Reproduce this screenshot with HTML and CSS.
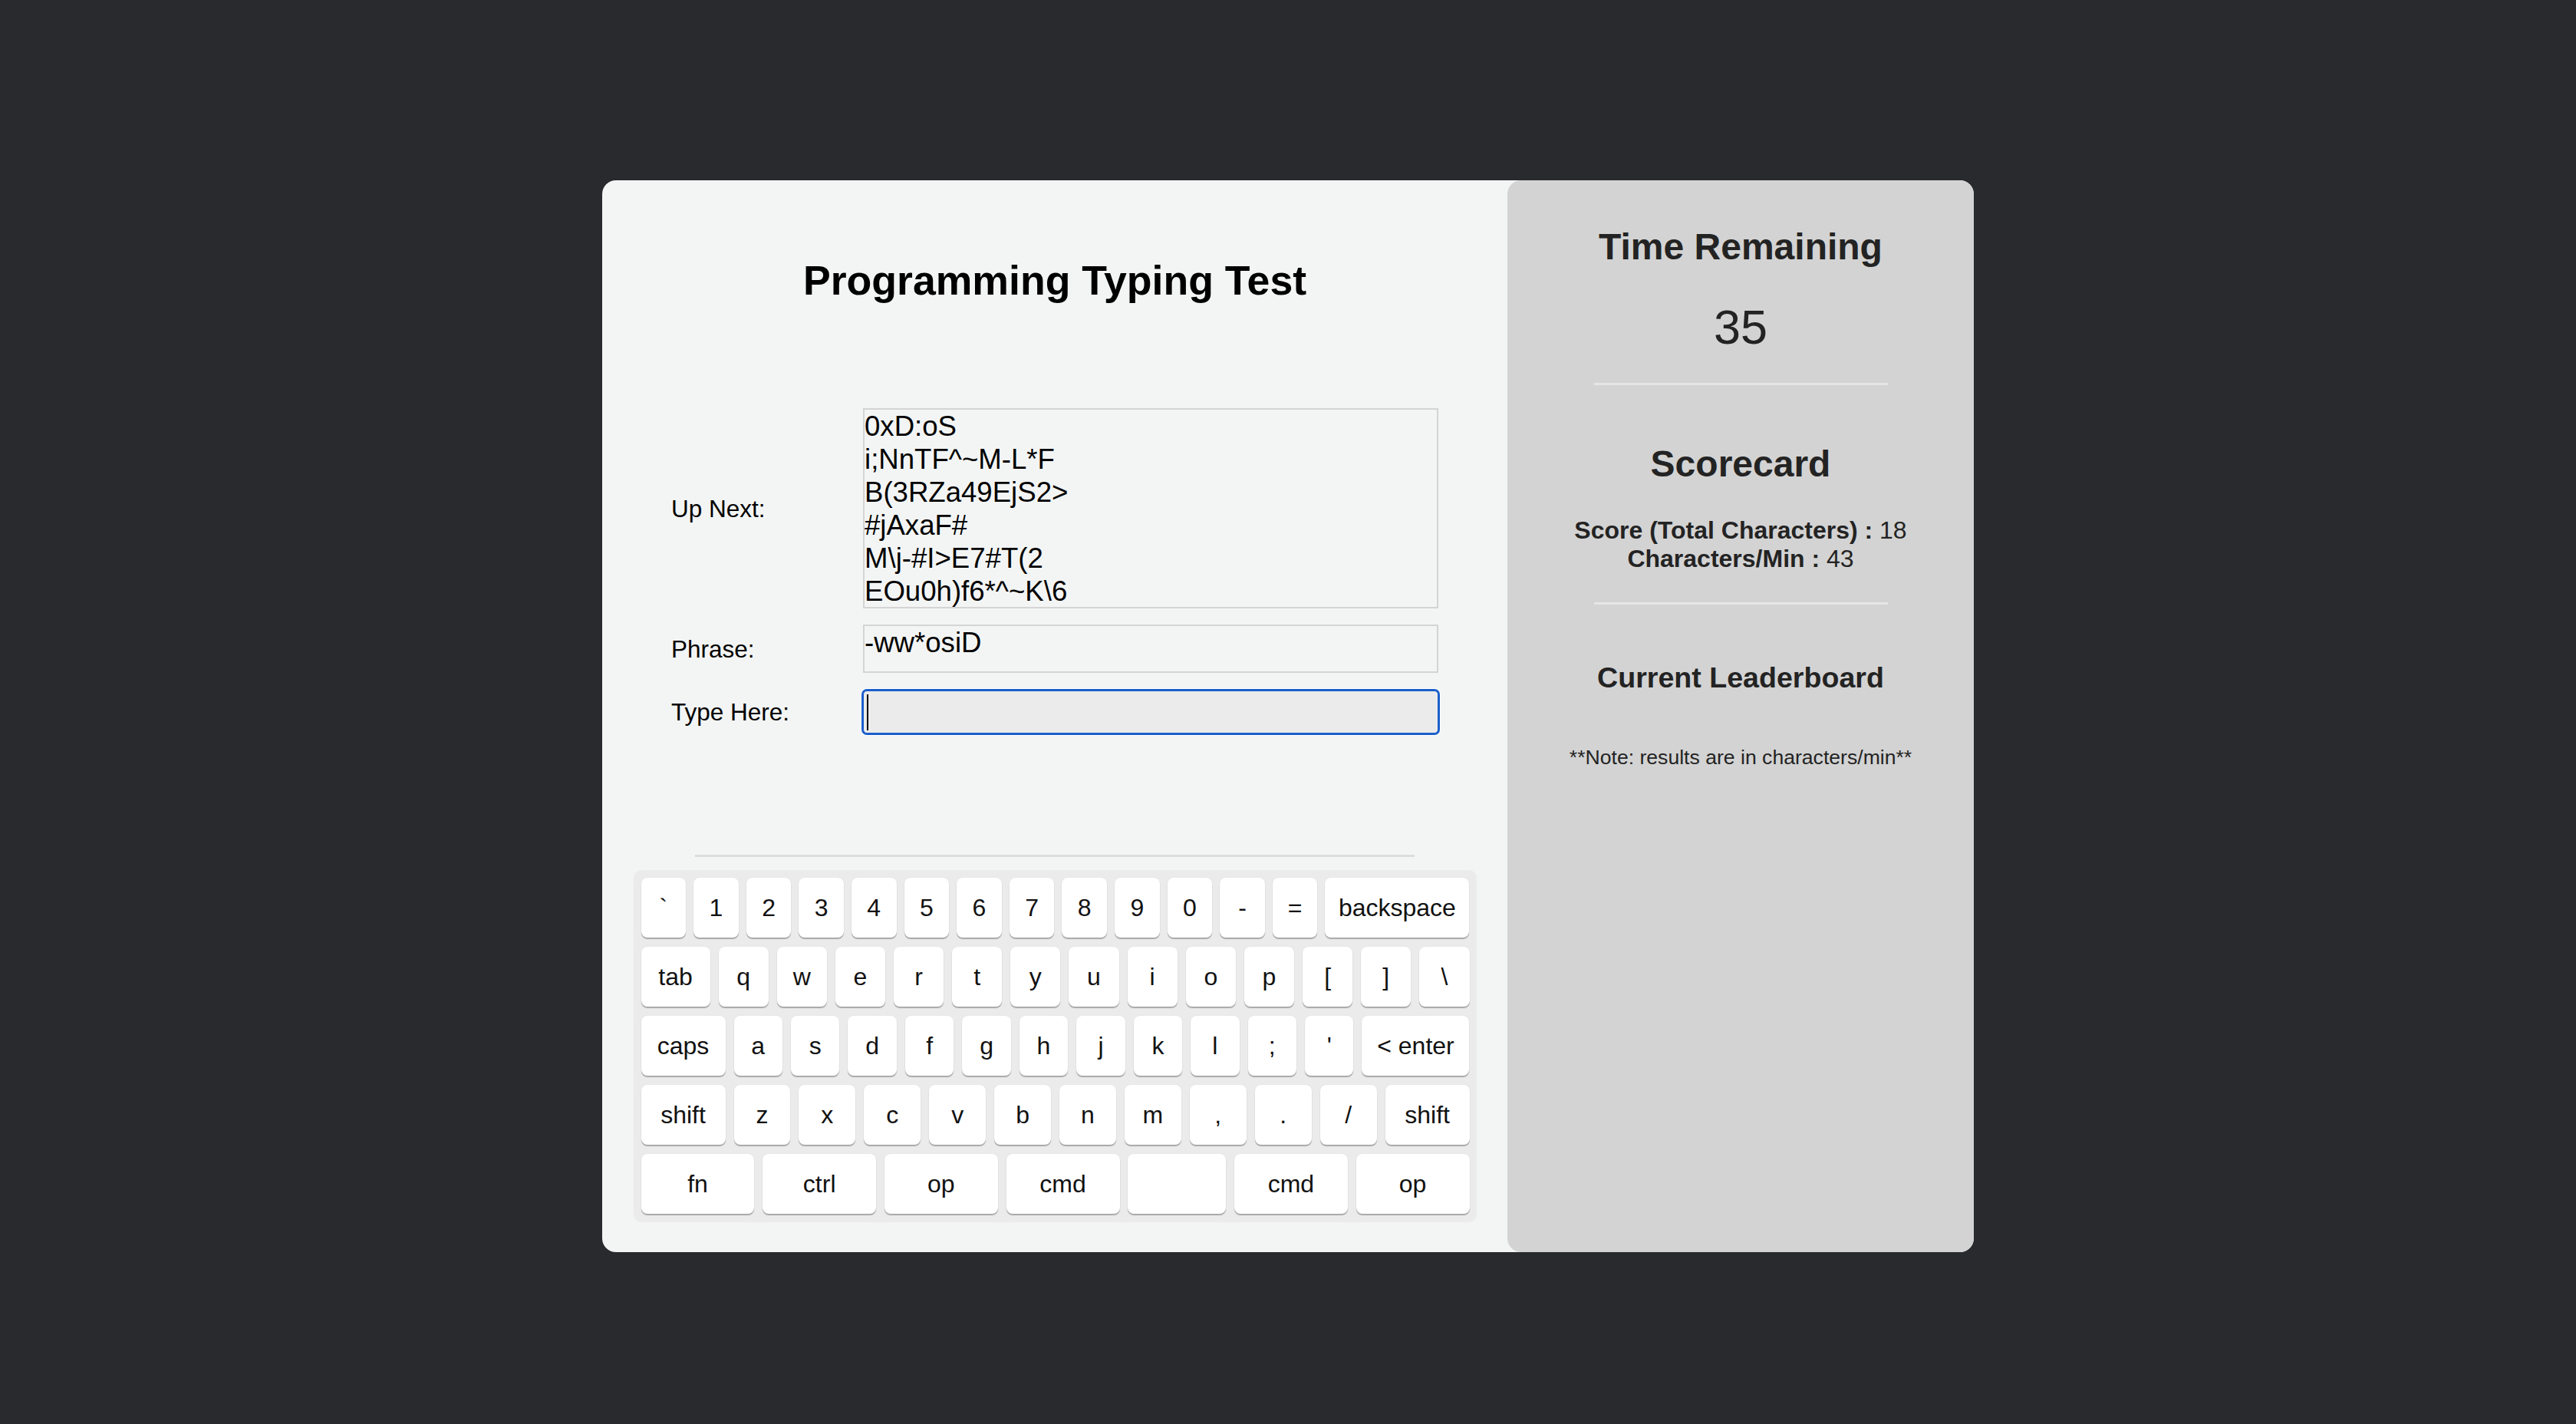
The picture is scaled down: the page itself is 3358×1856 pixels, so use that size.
FILE: index.html
```html
<!DOCTYPE html>
<html lang="en">
<head>
<meta charset="utf-8">
<title>Programming Typing Test</title>
<link rel="stylesheet" href="styles.css">
</head>
<body>
<main class="card">
  <section class="test">
    <h1 class="title">Programming Typing Test</h1>
    <div class="form">
      <div class="label">Up Next:</div>
      <div class="box upnext">0xD:oS<br>i;NnTF^~M-L*F<br>B(3RZa49EjS2&gt;<br>#jAxaF#<br>M\j-#I&gt;E7#T(2<br>EOu0h)f6*^~K\6</div>
      <div class="label">Phrase:</div>
      <div class="box phrase">-ww*osiD</div>
      <div class="label">Type Here:</div>
      <div class="input"><span class="caret"></span></div>
    </div>
    <hr class="rule">
    <div class="keyboard">
      <div class="row r1">
        <div class="key">`</div><div class="key">1</div><div class="key">2</div><div class="key">3</div><div class="key">4</div><div class="key">5</div><div class="key">6</div><div class="key">7</div><div class="key">8</div><div class="key">9</div><div class="key">0</div><div class="key">-</div><div class="key">=</div><div class="key bksp">backspace</div>
      </div>
      <div class="row">
        <div class="key tab">tab</div><div class="key">q</div><div class="key">w</div><div class="key">e</div><div class="key">r</div><div class="key">t</div><div class="key">y</div><div class="key">u</div><div class="key">i</div><div class="key">o</div><div class="key">p</div><div class="key">[</div><div class="key">]</div><div class="key">\</div>
      </div>
      <div class="row">
        <div class="key caps">caps</div><div class="key">a</div><div class="key">s</div><div class="key">d</div><div class="key">f</div><div class="key">g</div><div class="key">h</div><div class="key">j</div><div class="key">k</div><div class="key">l</div><div class="key">;</div><div class="key">'</div><div class="key enter">&lt; enter</div>
      </div>
      <div class="row">
        <div class="key shift">shift</div><div class="key">z</div><div class="key">x</div><div class="key">c</div><div class="key">v</div><div class="key">b</div><div class="key">n</div><div class="key">m</div><div class="key">,</div><div class="key">.</div><div class="key">/</div><div class="key shift">shift</div>
      </div>
      <div class="row r5">
        <div class="key">fn</div><div class="key">ctrl</div><div class="key">op</div><div class="key">cmd</div><div class="key space"></div><div class="key">cmd</div><div class="key">op</div>
      </div>
    </div>
  </section>
  <aside class="panel">
    <h2 class="time-title">Time Remaining</h2>
    <div class="time">35</div>
    <hr class="prule first">
    <h2 class="score-title">Scorecard</h2>
    <p class="stat first-stat"><b>Score (Total Characters) :</b> 18</p>
    <p class="stat"><b>Characters/Min :</b> 43</p>
    <hr class="prule second">
    <h3 class="board-title">Current Leaderboard</h3>
    <p class="note">**Note: results are in characters/min**</p>
  </aside>
</main>
</body>
</html>
```

FILE: styles.css
```css
* { box-sizing: border-box; }
html, body { margin: 0; }
body {
  background: #292a2e;
  font-family: "Liberation Sans", Arial, Helvetica, sans-serif;
  padding-top: 235px;
  min-height: 100vh;
}
.card {
  width: 1788px;
  margin: 0 auto;
  display: flex;
  background: #f3f5f4;
  border-radius: 18px;
  overflow: hidden;
}
.test {
  width: 1180px;
  padding: 100px 0 39px;
  display: flex;
  flex-direction: column;
  align-items: center;
}
.title {
  margin: 0;
  font-size: 53.6px;
  line-height: 61px;
  font-weight: bold;
  color: #000;
}
.form {
  margin-top: 136px;
  display: grid;
  grid-template-columns: 250px 750px;
  row-gap: 21px;
  align-items: center;
}
.label {
  font-size: 31.5px;
  line-height: 36px;
  color: #000;
}
.box {
  border: 2px solid #d4d4d4;
  font-size: 36.6px;
  line-height: 43px;
  color: #000;
  overflow: hidden;
  white-space: nowrap;
}
.upnext { height: 261px; }
.phrase { height: 63px; line-height: 44px; }
.input {
  height: 56px;
  margin: 2px 0;
  border: 1px solid #1a5fcb;
  box-shadow: 0 0 0 2px #1a5fcb, 0 0 0 3px #ffffff;
  border-radius: 5px;
  background: #ebebeb;
  display: flex;
  align-items: center;
  padding-left: 4px;
}
.caret {
  width: 2px;
  height: 47px;
  background: #000;
}
.rule {
  width: 938px;
  height: 3px;
  border: 0;
  background: #dcdcdc;
  margin: 156px 0 0;
}
.keyboard {
  margin-top: 17px;
  width: 1099px;
  padding: 10px 9px 11px 10px;
  background: #ebebeb;
  border-radius: 10px;
  display: flex;
  flex-direction: column;
  gap: 12px;
}
.row { display: flex; gap: 11px; }
.row.r1 { gap: 10px; }
.row.r5 { gap: 10.7px; }
.key {
  flex: 1 1 0;
  height: 78px;
  background: #fff;
  border-radius: 8px;
  box-shadow: 0 2px 1px rgba(0, 0, 0, 0.28), 0 0 2px rgba(0, 0, 0, 0.06);
  display: flex;
  align-items: center;
  justify-content: center;
  font-size: 32px;
  color: #111;
}
.key.bksp { flex: 0 0 188px; }
.key.tab { flex: 0 0 90px; }
.key.caps { flex: 0 0 110px; }
.key.enter { flex: 0 0 140px; }
.key.shift { flex: 0 0 110px; }
.key.space { flex: 0 0 128px; }

.panel {
  width: 608px;
  background: #d3d3d3;
  border-radius: 18px;
  color: #232323;
  text-align: center;
  padding-top: 60px;
  display: flex;
  flex-direction: column;
  align-items: center;
}
.time-title, .score-title {
  margin: 0;
  font-size: 48px;
  line-height: 54px;
  font-weight: bold;
}
.time {
  margin-top: 41px;
  font-size: 63px;
  line-height: 72px;
}
.prule {
  width: 383px;
  height: 3px;
  border: 0;
  background: #e6e6e6;
  margin: 0;
}
.prule.first { margin-top: 37px; }
.score-title { margin-top: 76px; }
.stat {
  margin: 0;
  font-size: 32px;
  line-height: 37px;
}
.stat.first-stat { margin-top: 41px; }
.prule.second { margin-top: 38px; }
.board-title {
  margin: 73px 0 0;
  font-size: 37.6px;
  line-height: 44px;
  font-weight: bold;
}
.note {
  margin: 66px 0 0;
  font-size: 26.6px;
  line-height: 32px;
}
```
